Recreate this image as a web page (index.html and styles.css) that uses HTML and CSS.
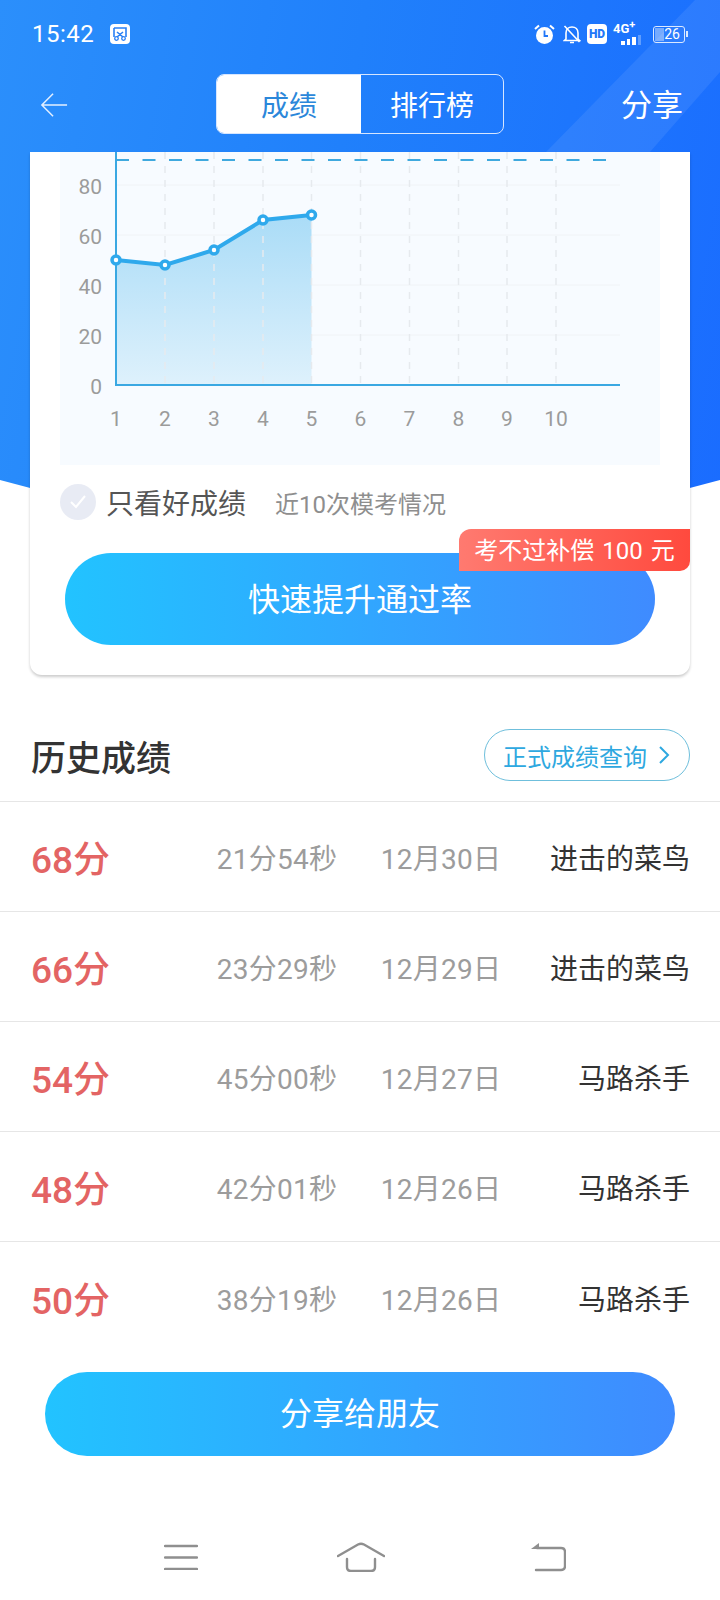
FILE: index.html
```html
<!DOCTYPE html>
<html lang="zh-CN">

<head>
    <meta charset="UTF-8">
    <meta name="viewport" content="width=device-width, initial-scale=1.0">
    <title>成绩</title>
    <link rel="stylesheet" href="styles.css">
</head>

<body>
    <div class="page">
        <div class="blue-bg"><div class="blue-band"></div></div>

        <div class="status-bar">
            <span class="clock">15:42</span>
            <svg class="shot-icon" width="20" height="20" viewBox="0 0 20 20">
                <rect width="20" height="20" rx="4" fill="#fff" />
                <path d="M4 4h12v9M4 13V4M7 8l6 5M13 8l-6 5" fill="none" stroke="#2a80f5" stroke-width="1.6" />
                <circle cx="6.5" cy="14.5" r="1.8" fill="none" stroke="#2a80f5" stroke-width="1.3" />
                <circle cx="13.5" cy="14.5" r="1.8" fill="none" stroke="#2a80f5" stroke-width="1.3" />
            </svg>
            <div class="status-right">
                <svg width="21" height="21" viewBox="0 0 21 21">
                    <circle cx="10.5" cy="11.5" r="8.5" fill="#fff" />
                    <path d="M10.5 6.5v5.5h3.5" fill="none" stroke="#2277f8" stroke-width="1.8" />
                    <path d="M1 5l4-3.5M20 5l-4-3.5" stroke="#fff" stroke-width="2" />
                </svg>
                <svg class="bell" width="18" height="21" viewBox="0 0 18 21">
                    <path d="M3 15V9c0-3.500 2.500-6 6-6s6 2.500 6 6v6l1.500 1.500h-15z" fill="none" stroke="#fff" stroke-width="1.6" />
                    <path d="M7 18.500h4M1.500 2l15 16" stroke="#fff" stroke-width="1.6" />
                </svg>
                <span class="hd">HD</span>
                <div class="signal">
                    <span class="signal-text">4G<sup>+</sup></span>
                    <div class="signal-bars">
                        <i class="bar bar-1"></i><i class="bar bar-2"></i><i class="bar bar-3"></i><i class="bar bar-4"></i>
                    </div>
                </div>
                <div class="battery">
                    <div class="battery-body"><span class="battery-level"></span><span class="battery-num">26</span></div>
                    <i class="battery-cap"></i>
                </div>
            </div>
        </div>

        <div class="nav-bar">
            <svg class="back" width="28" height="26" viewBox="0 0 30 26">
                <path d="M29 13H2M14 1L2 13l12 12" fill="none" stroke="#e3efff" stroke-width="1.6" />
            </svg>
            <div class="tabs">
                <div class="tab tab-active">成绩</div>
                <div class="tab">排行榜</div>
            </div>
            <span class="share">分享</span>
        </div>

        <div class="card">
            <div class="chart-box">
                <svg class="chart" width="600" height="313" viewBox="0 0 600 313">
                    <defs>
                        <linearGradient id="area" x1="0" y1="0" x2="0" y2="1">
                            <stop offset="0" stop-color="#aadcf7" />
                            <stop offset="1" stop-color="#def1fc" />
                        </linearGradient>
                    </defs>
                    <g stroke="#f0f3f6" stroke-width="1">
                        <path d="M56 33H560M56 83H560M56 133H560M56 183H560" />
                    </g>
                    <path d="M56 108L105 113L154 98L203 68L251.500 63V233H56Z" fill="url(#area)" />
                    <g stroke="#e6eaee" stroke-width="1.500" stroke-dasharray="7 7">
                        <path d="M105 0V233M154 0V233M203 0V233M251.500 0V233M300.500 0V233M349.500 0V233M398.500 0V233M447 0V233M496 0V233" />
                    </g>
                    <path d="M56 8H552" stroke="#3fa9de" stroke-width="2" stroke-dasharray="13 13.500" fill="none" />
                    <path d="M56 0V233H560" fill="none" stroke="#3aa8e2" stroke-width="2" />
                    <path d="M56 108L105 113L154 98L203 68L251.500 63" fill="none" stroke="#2fa9ec" stroke-width="4" />
                    <g fill="#fff" stroke="#2fa9ec" stroke-width="3.500">
                        <circle cx="56" cy="108" r="4" />
                        <circle cx="105" cy="113" r="4" />
                        <circle cx="154" cy="98" r="4" />
                        <circle cx="203" cy="68" r="4" />
                        <circle cx="251.500" cy="63" r="4" />
                    </g>
                    <g class="tick" text-anchor="end">
                        <text x="42" y="42">80</text>
                        <text x="42" y="92">60</text>
                        <text x="42" y="142">40</text>
                        <text x="42" y="192">20</text>
                        <text x="42" y="242">0</text>
                    </g>
                    <g class="tick" text-anchor="middle">
                        <text x="56" y="274">1</text>
                        <text x="105" y="274">2</text>
                        <text x="154" y="274">3</text>
                        <text x="203" y="274">4</text>
                        <text x="251.500" y="274">5</text>
                        <text x="300.500" y="274">6</text>
                        <text x="349.500" y="274">7</text>
                        <text x="398.500" y="274">8</text>
                        <text x="447" y="274">9</text>
                        <text x="496" y="274">10</text>
                    </g>
                </svg>
            </div>
            <div class="filter">
                <span class="check">
                    <svg width="18" height="16" viewBox="0 0 18 16">
                        <path d="M2 8l5 5 9-11" fill="none" stroke="#fff" stroke-width="2" />
                    </svg>
                </span>
                <span class="filter-label">只看好成绩</span>
                <span class="filter-note">近10次模考情况</span>
            </div>
            <div class="boost-wrap">
                <div class="grad-btn boost-btn">快速提升通过率</div>
                <div class="badge">考不过补偿 100 元</div>
            </div>
        </div>

        <div class="history-head">
            <span class="history-title">历史成绩</span>
            <div class="query-btn">
                正式成绩查询
                <svg width="12" height="20" viewBox="0 0 12 20">
                    <path d="M2 2l8 8-8 8" fill="none" stroke="#2ea8e0" stroke-width="2" />
                </svg>
            </div>
        </div>

        <div class="row">
            <span class="score">68分</span>
            <span class="used">21分54秒</span>
            <span class="date">12月30日</span>
            <span class="name">进击的菜鸟</span>
        </div>
        <div class="row">
            <span class="score">66分</span>
            <span class="used">23分29秒</span>
            <span class="date">12月29日</span>
            <span class="name">进击的菜鸟</span>
        </div>
        <div class="row">
            <span class="score">54分</span>
            <span class="used">45分00秒</span>
            <span class="date">12月27日</span>
            <span class="name">马路杀手</span>
        </div>
        <div class="row">
            <span class="score">48分</span>
            <span class="used">42分01秒</span>
            <span class="date">12月26日</span>
            <span class="name">马路杀手</span>
        </div>
        <div class="row">
            <span class="score">50分</span>
            <span class="used">38分19秒</span>
            <span class="date">12月26日</span>
            <span class="name">马路杀手</span>
        </div>

        <div class="grad-btn share-btn">分享给朋友</div>

        <div class="sys-nav">
            <svg width="34" height="26" viewBox="0 0 34 26">
                <path d="M1 2H33M1 13.500H33M1 25H33" stroke="#8f8f8f" stroke-width="2.400" stroke-linecap="round" />
            </svg>
            <svg width="48" height="30" viewBox="0 0 48 30">
                <path d="M1 14L21 2.500Q24 1 27 2.500L47 14" fill="none" stroke="#8f8f8f" stroke-width="2.400" stroke-linecap="round" />
                <path d="M10 17V25Q10 29 14 29H34Q38 29 38 25V17" fill="none" stroke="#8f8f8f" stroke-width="2.400" stroke-linecap="round" />
            </svg>
            <svg class="sys-back" width="36" height="30" viewBox="0 0 36 30">
                <path d="M7 6H31Q35 6 35 10V24Q35 28 31 28H6" fill="none" stroke="#8f8f8f" stroke-width="2.400" stroke-linecap="round" />
                <path d="M9 1V7H1Z" fill="#8f8f8f" />
            </svg>
        </div>
    </div>
</body>

</html>
```

FILE: styles.css
```css
* {
    box-sizing: border-box;
}

body {
    margin: 0;
    background-color: #fff;
    font-family: Roboto, "Noto Sans CJK SC", sans-serif;
}

.page {
    position: relative;
    width: 720px;
    height: 1600px;
    overflow: hidden;
    background-color: #fff;
}

/* blue backdrop behind the header, curved at the bottom */
.blue-bg {
    position: absolute;
    top: 0;
    left: 0;
    width: 720px;
    height: 540px;
    background: linear-gradient(100deg, #2b8ffb 0%, #2080fb 45%, #1a6cff 100%);
    clip-path: path("M0 0H720V480Q360 580 0 480Z");
}

.blue-band {
    position: absolute;
    top: 0;
    left: 0;
    width: 720px;
    height: 152px;
    background-color: rgba(255, 255, 255, 0.08);
    clip-path: polygon(695px 0, 720px 0, 720px 72px, 650px 152px, 546px 152px);
}

.status-bar {
    position: relative;
    display: flex;
    align-items: center;
    height: 68px;
    padding: 0 32px 0 32px;
    color: #fff;
}

.clock {
    font-size: 24px;
    letter-spacing: 0.5px;
}

.shot-icon {
    margin-left: 16px;
}

.status-right {
    display: flex;
    align-items: center;
    gap: 6px;
    margin-left: auto;
}

.bell {
    margin-left: 2px;
}

.hd {
    width: 20px;
    height: 20px;
    border-radius: 4px;
    background-color: #fff;
    color: #2277f8;
    font-size: 12px;
    font-weight: 900;
    line-height: 20px;
    text-align: center;
}

.signal {
    display: flex;
    flex-direction: column;
    width: 28px;
    height: 22px;
}

.signal-text {
    font-size: 13px;
    font-weight: 700;
    line-height: 12px;
}

.signal-text sup {
    font-size: 11px;
    line-height: 0;
}

.signal-bars {
    display: flex;
    align-items: flex-end;
    gap: 2px;
    height: 10px;
    padding-left: 8px;
}

.bar {
    width: 4px;
    background-color: #fff;
}

.bar-1 {
    height: 4px;
}

.bar-2 {
    height: 6px;
}

.bar-3 {
    height: 8px;
}

.bar-4 {
    height: 10px;
    opacity: 0.3;
}

.battery {
    display: flex;
    align-items: center;
    margin-left: 6px;
}

.battery-body {
    position: relative;
    width: 32px;
    height: 17px;
    border: 1px solid #dbe9ff;
    border-radius: 3px;
}

.battery-level {
    position: absolute;
    top: 1px;
    left: 1px;
    width: 9px;
    height: 13px;
    background-color: rgba(255, 255, 255, 0.4);
}

.battery-num {
    position: absolute;
    top: 0;
    right: 4px;
    font-size: 14px;
    line-height: 15px;
}

.battery-cap {
    width: 2px;
    height: 6px;
    margin-left: 1px;
    background-color: #dbe9ff;
}

.nav-bar {
    position: relative;
    display: flex;
    align-items: center;
    height: 84px;
    padding: 0 37px 10px 40px;
    color: #fff;
}

.tabs {
    position: absolute;
    top: 6px;
    left: 216px;
    display: flex;
    width: 288px;
    height: 60px;
    border: 1px solid #d6e6ff;
    border-radius: 8px;
    overflow: hidden;
}

.tab {
    flex: 1;
    padding-top: 3px;
    font-size: 28px;
    line-height: 58px;
    text-align: center;
}

.tab-active {
    flex: 0 0 144px;
    background-color: #fff;
    color: #2b87da;
}

.share {
    margin-left: auto;
    margin-top: -5px;
    font-size: 31px;
}

.card {
    position: relative;
    height: 523px;
    margin: 0 30px;
    padding: 0 30px;
    border-radius: 0 0 12px 12px;
    background-color: #fff;
    box-shadow: 0 2px 3px rgba(0, 0, 0, 0.2);
}

.chart-box {
    height: 313px;
    background-color: #f7fbff;
}

.chart {
    display: block;
}

.tick {
    fill: #9b9b9b;
    font-size: 21px;
}

.filter {
    display: flex;
    align-items: center;
    height: 74px;
}

.check {
    display: flex;
    align-items: center;
    justify-content: center;
    width: 36px;
    height: 36px;
    border-radius: 50%;
    background-color: #e8ebf4;
}

.filter-label {
    margin-left: 10px;
    color: #555;
    font-size: 28px;
}

.filter-note {
    margin-left: 29px;
    color: #8e8e8e;
    font-size: 24px;
}

.boost-wrap {
    position: relative;
    margin: 0 5px;
}

.grad-btn {
    background: linear-gradient(90deg, #22c3ff, #3f8bff);
    color: #fff;
    font-size: 32px;
    text-align: center;
}

.boost-btn {
    height: 92px;
    margin-top: 14px;
    border-radius: 46px;
    line-height: 94px;
}

.badge {
    position: absolute;
    top: -24px;
    right: -35px;
    width: 231px;
    height: 42px;
    border-radius: 12px 0 10px 0;
    background: linear-gradient(90deg, #ff7a70, #ff4a3e);
    color: #fff;
    font-size: 24px;
    line-height: 44px;
    text-align: center;
    word-spacing: 2px;
}

.history-head {
    display: flex;
    align-items: center;
    justify-content: space-between;
    height: 127px;
    padding: 34px 30px 0 31px;
    border-bottom: 1px solid #e6e6e6;
}

.history-title {
    color: #333;
    font-size: 35px;
    font-weight: 500;
}

.query-btn {
    display: flex;
    align-items: center;
    gap: 11px;
    height: 52px;
    padding: 0 19px 0 18px;
    border: 1px solid #6fbfdc;
    border-radius: 26px;
    color: #2ea8e0;
    font-size: 24px;
}

.row {
    display: grid;
    grid-template-columns: 170px 152px 176px 1fr;
    align-items: center;
    height: 110px;
    padding: 1px 30px 0 31px;
    border-bottom: 1px solid #e6e6e6;
    font-size: 28px;
}

.row:nth-last-child(3) {
    border-bottom: 0;
}

.score {
    color: #e36464;
    font-size: 37px;
    font-weight: 500;
}

.used,
.date {
    color: #9c9c9c;
    letter-spacing: 0.3px;
    text-align: center;
}

.name {
    color: #333;
    text-align: right;
}

.share-btn {
    width: 630px;
    height: 84px;
    margin: 20px 0 0 45px;
    border-radius: 42px;
    line-height: 84px;
}

.sys-nav {
    position: absolute;
    bottom: 28px;
    left: 164px;
    display: flex;
    align-items: center;
    gap: 139px;
}

.sys-back {
    margin-left: 6px;
}
```
